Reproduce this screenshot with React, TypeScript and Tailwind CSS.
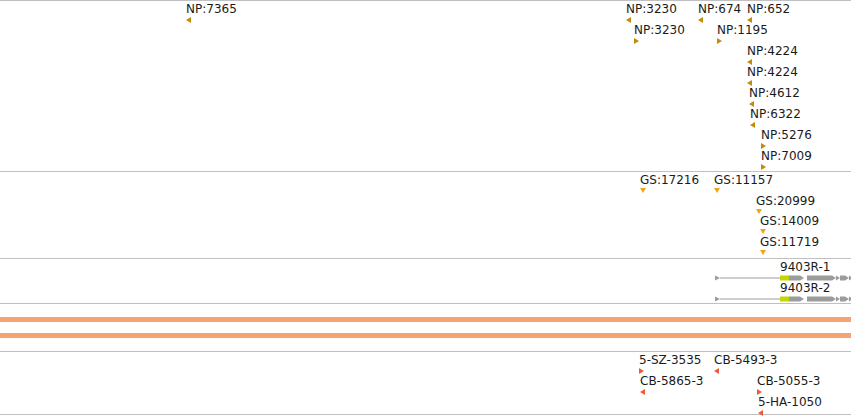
type Dir = 'left' | 'right' | 'down';

type Feat = { x: number; y: number; label: string; dir: Dir };

const NP_COLOR = '#c48a0a';
const GS_COLOR = '#f0a41a';
const CB_COLOR = '#f05a38';

const NP: Feat[] = [
  { x: 186, y: 1, label: 'NP:7365', dir: 'left' },
  { x: 626, y: 1, label: 'NP:3230', dir: 'left' },
  { x: 698, y: 1, label: 'NP:674', dir: 'left' },
  { x: 747, y: 1, label: 'NP:652', dir: 'left' },
  { x: 634, y: 22, label: 'NP:3230', dir: 'right' },
  { x: 717, y: 22, label: 'NP:1195', dir: 'right' },
  { x: 747, y: 43, label: 'NP:4224', dir: 'left' },
  { x: 747, y: 64, label: 'NP:4224', dir: 'left' },
  { x: 749, y: 85, label: 'NP:4612', dir: 'left' },
  { x: 750, y: 106, label: 'NP:6322', dir: 'left' },
  { x: 761, y: 127, label: 'NP:5276', dir: 'right' },
  { x: 761, y: 148, label: 'NP:7009', dir: 'right' },
];

const GS: Feat[] = [
  { x: 640, y: 1, label: 'GS:17216', dir: 'down' },
  { x: 714, y: 1, label: 'GS:11157', dir: 'down' },
  { x: 756, y: 22, label: 'GS:20999', dir: 'down' },
  { x: 760, y: 42, label: 'GS:14009', dir: 'down' },
  { x: 760, y: 63, label: 'GS:11719', dir: 'down' },
];

const CB: Feat[] = [
  { x: 639, y: 1, label: '5-SZ-3535', dir: 'right' },
  { x: 714, y: 1, label: 'CB-5493-3', dir: 'left' },
  { x: 640, y: 22, label: 'CB-5865-3', dir: 'left' },
  { x: 757, y: 22, label: 'CB-5055-3', dir: 'right' },
  { x: 758, y: 43, label: '5-HA-1050', dir: 'left' },
];

function Arrow({ dir, color }: { dir: Dir; color: string }) {
  if (dir === 'down') {
    return (
      <svg width={6} height={5} className="block">
        <polygon points="0,0 6,0 3,5" fill={color} />
      </svg>
    );
  }
  const pts = dir === 'left' ? '5,0 5,6 0,3' : '0,0 0,6 5,3';
  return (
    <svg width={5} height={6} className="block">
      <polygon points={pts} fill={color} />
    </svg>
  );
}

function Feature({ f, color }: { f: Feat; color: string }) {
  return (
    <div className="absolute flex flex-col gap-px" style={{ left: f.x, top: f.y }}>
      <div className="text-[12px] leading-[14px] text-[#1a1a1a] whitespace-nowrap">{f.label}</div>
      <Arrow dir={f.dir} color={color} />
    </div>
  );
}

function Gene({ top, label }: { top: number; label: string }) {
  return (
    <div className="absolute flex flex-col items-start gap-px" style={{ left: 714, top }}>
      <div className="ml-[66px] text-[12px] leading-[14px] text-[#1a1a1a] whitespace-nowrap">{label}</div>
      <svg width={137} height={6} className="block">
        <g fill="#9c9c9c">
          <polygon points="1,0.5 1,5.5 6,3" />
          <rect x={6} y={2.5} width={60} height={1} />
          <rect x={75} y={0.5} width={11} height={5} />
          <polygon points="86,0.5 90,3 86,5.5" />
          <rect x={93} y={0.5} width={25} height={5} />
          <polygon points="118,0.5 122,3 118,5.5" />
          <polygon points="122,0.5 126,3 122,5.5" />
          <rect x={126} y={0.5} width={5} height={5} />
          <polygon points="131,0.5 135,3 131,5.5" />
          <polygon points="135,0.5 139,3 135,5.5" />
        </g>
        <rect x={66} y={0.5} width={9} height={5} fill="#c4d600" />
      </svg>
    </div>
  );
}

export default function App() {
  return (
    <div className="w-[851px] h-[418px] bg-white overflow-hidden" style={{ fontFamily: '"DejaVu Sans", sans-serif' }}>
      {/* NP track */}
      <div className="relative h-[171px] border-t border-[#c0c0c0]">
        {NP.map((f, i) => (
          <Feature key={i} f={f} color={NP_COLOR} />
        ))}
      </div>

      {/* GS track */}
      <div className="relative h-[87px] border-t border-[#c0c0c0]">
        {GS.map((f, i) => (
          <Feature key={i} f={f} color={GS_COLOR} />
        ))}
      </div>

      {/* gene track */}
      <div className="relative h-[45px] border-t border-[#c0c0c0]">
        <Gene top={1} label="9403R-1" />
        <Gene top={22} label="9403R-2" />
      </div>

      {/* separator */}
      <div className="h-[48px] border-t border-[#c0c0c0] pt-[13px] flex flex-col gap-[11px]">
        <div className="h-[5px] bg-[#f4a472]" />
        <div className="h-[5px] bg-[#f4a472]" />
      </div>

      {/* CB track */}
      <div className="relative h-[64px] border-y border-[#c0c0c0]">
        {CB.map((f, i) => (
          <Feature key={i} f={f} color={CB_COLOR} />
        ))}
      </div>
    </div>
  );
}
